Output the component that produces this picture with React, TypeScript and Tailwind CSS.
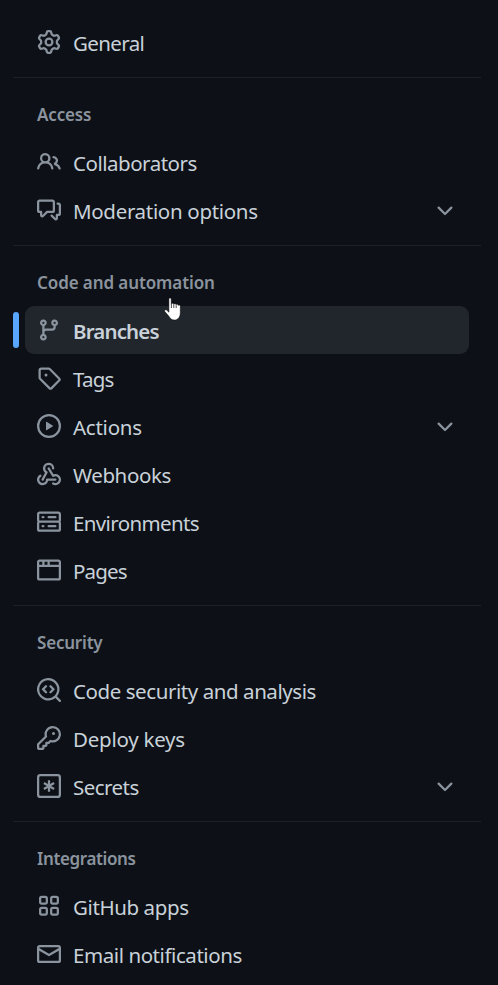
import type { ReactNode } from "react";

const paths = {
  gear: "M8 0a8.2 8.2 0 0 1 .701.031C9.444.095 9.99.645 10.16 1.29l.288 1.107c.018.066.079.158.212.224.231.114.454.243.668.386.123.082.233.09.299.071l1.103-.303c.644-.176 1.392.021 1.82.63.27.385.506.792.704 1.218.315.675.111 1.422-.364 1.891l-.814.806c-.049.048-.098.147-.088.294.016.257.016.515 0 .772-.01.147.038.246.088.294l.814.806c.475.469.679 1.216.364 1.891a7.977 7.977 0 0 1-.704 1.217c-.428.61-1.176.807-1.82.63l-1.102-.302c-.067-.019-.177-.011-.3.071a5.909 5.909 0 0 1-.668.386c-.133.066-.194.158-.211.224l-.29 1.106c-.168.646-.715 1.196-1.458 1.26a8.006 8.006 0 0 1-1.402 0c-.743-.064-1.289-.614-1.458-1.26l-.289-1.106c-.018-.066-.079-.158-.212-.224a5.738 5.738 0 0 1-.668-.386c-.123-.082-.233-.09-.299-.071l-1.103.303c-.644.176-1.392-.021-1.82-.63a8.12 8.12 0 0 1-.704-1.218c-.315-.675-.111-1.422.363-1.891l.815-.806c.05-.048.098-.147.088-.294a6.214 6.214 0 0 1 0-.772c.01-.147-.038-.246-.088-.294l-.815-.806C.635 6.045.431 5.298.746 4.623a7.92 7.92 0 0 1 .704-1.217c.428-.61 1.176-.807 1.82-.63l1.102.302c.067.019.177.011.3-.071.214-.143.437-.272.668-.386.133-.066.194-.158.211-.224l.29-1.106C6.009.645 6.556.095 7.299.03 7.53.01 7.764 0 8 0Zm-.571 1.525c-.036.003-.108.036-.137.146l-.289 1.105c-.147.561-.549.967-.998 1.189-.173.086-.34.183-.5.29-.417.278-.97.423-1.529.27l-1.103-.303c-.109-.03-.175.016-.195.045-.22.312-.412.644-.573.99-.014.031-.021.11.059.19l.815.806c.411.406.562.957.53 1.456a4.709 4.709 0 0 0 0 .582c.032.499-.119 1.05-.53 1.456l-.815.806c-.081.08-.073.159-.059.19.162.346.353.677.573.989.02.03.085.076.195.046l1.102-.303c.56-.153 1.113-.008 1.53.27.161.107.328.204.501.29.447.222.85.629.997 1.189l.289 1.105c.029.109.101.143.137.146a6.6 6.6 0 0 0 1.142 0c.036-.003.108-.036.137-.146l.289-1.105c.147-.561.549-.967.998-1.189.173-.086.34-.183.5-.29.417-.278.97-.423 1.529-.27l1.103.303c.109.029.175-.016.195-.045.22-.313.411-.644.573-.99.014-.031.021-.11-.059-.19l-.815-.806c-.411-.406-.562-.957-.53-1.456a4.709 4.709 0 0 0 0-.582c-.032-.499.119-1.05.53-1.456l.815-.806c.081-.08.073-.159.059-.19a6.464 6.464 0 0 0-.573-.989c-.02-.03-.085-.076-.195-.046l-1.102.303c-.56.153-1.113.008-1.53-.27a4.44 4.44 0 0 0-.501-.29c-.447-.222-.85-.629-.997-1.189l-.289-1.105c-.029-.11-.101-.143-.137-.146a6.6 6.6 0 0 0-1.142 0ZM11 8a3 3 0 1 1-6 0 3 3 0 0 1 6 0ZM9.5 8a1.5 1.5 0 1 0-3.001.001A1.5 1.5 0 0 0 9.5 8Z",
  people: "M2 5.5a3.5 3.5 0 1 1 5.898 2.549 5.508 5.508 0 0 1 3.034 4.084.75.75 0 1 1-1.482.235 4 4 0 0 0-7.9 0 .75.75 0 0 1-1.482-.236A5.507 5.507 0 0 1 3.102 8.05 3.493 3.493 0 0 1 2 5.5ZM11 4a3.001 3.001 0 0 1 2.22 5.018 5.01 5.01 0 0 1 2.56 3.012.749.749 0 0 1-.885.954.752.752 0 0 1-.549-.514 3.507 3.507 0 0 0-2.522-2.372.75.75 0 0 1-.574-.73v-.352a.75.75 0 0 1 .416-.672A1.5 1.5 0 0 0 11 5.5.75.75 0 0 1 11 4Zm-5.5-.5a2 2 0 1 0-.001 3.999A2 2 0 0 0 5.5 3.5Z",
  discussion: "M1.75 1h8.5c.966 0 1.75.784 1.75 1.75v5.5A1.75 1.75 0 0 1 10.25 10H7.061l-2.574 2.573A1.458 1.458 0 0 1 2 11.543V10h-.25A1.75 1.75 0 0 1 0 8.25v-5.5C0 1.784.784 1 1.75 1ZM1.5 2.75v5.5c0 .138.112.25.25.25h1a.75.75 0 0 1 .75.75v2.19l2.72-2.72a.749.749 0 0 1 .53-.22h3.5a.25.25 0 0 0 .25-.25v-5.5a.25.25 0 0 0-.25-.25h-8.5a.25.25 0 0 0-.25.25Zm13 2a.25.25 0 0 0-.25-.25h-.5a.75.75 0 0 1 0-1.5h.5c.966 0 1.75.784 1.75 1.75v5.5A1.75 1.75 0 0 1 14.25 12H14v1.543a1.458 1.458 0 0 1-2.487 1.03L9.22 12.28a.749.749 0 0 1 .326-1.275.749.749 0 0 1 .734.215l2.22 2.22v-2.19a.75.75 0 0 1 .75-.75h1a.25.25 0 0 0 .25-.25Z",
  branch: "M9.5 3.25a2.25 2.25 0 1 1 3 2.122V6A2.5 2.5 0 0 1 10 8.5H6a1 1 0 0 0-1 1v1.128a2.251 2.251 0 1 1-1.5 0V5.372a2.25 2.25 0 1 1 1.5 0v1.836A2.493 2.493 0 0 1 6 7h4a1 1 0 0 0 1-1v-.628A2.25 2.25 0 0 1 9.5 3.25Zm-6 0a.75.75 0 1 0 1.5 0 .75.75 0 0 0-1.5 0Zm8.25-.75a.75.75 0 1 0 0 1.5.75.75 0 0 0 0-1.5ZM4.25 12a.75.75 0 1 0 0 1.5.75.75 0 0 0 0-1.5Z",
  tag: "M1 7.775V2.75C1 1.784 1.784 1 2.75 1h5.025c.464 0 .91.184 1.238.513l6.25 6.25a1.75 1.75 0 0 1 0 2.474l-5.026 5.026a1.75 1.75 0 0 1-2.474 0l-6.25-6.25A1.752 1.752 0 0 1 1 7.775Zm1.5 0c0 .066.026.13.073.177l6.25 6.25a.25.25 0 0 0 .354 0l5.025-5.025a.25.25 0 0 0 0-.354l-6.25-6.25a.25.25 0 0 0-.177-.073H2.75a.25.25 0 0 0-.25.25ZM6 5a1 1 0 1 1 0 2 1 1 0 0 1 0-2Z",
  play: "M8 0a8 8 0 1 1 0 16A8 8 0 0 1 8 0ZM1.5 8a6.5 6.5 0 1 0 13 0 6.5 6.5 0 0 0-13 0Zm4.879-2.773 4.264 2.559a.25.25 0 0 1 0 .428l-4.264 2.559A.25.25 0 0 1 6 10.559V5.442a.25.25 0 0 1 .379-.215Z",
  webhook: "M5.5 4.25a2.25 2.25 0 0 1 4.5 0 .75.75 0 0 0 1.5 0 3.75 3.75 0 1 0-6.14 2.889l-2.272 4.258a.75.75 0 0 0 1.324.706L7 7.25a.75.75 0 0 0-.309-1.015A2.25 2.25 0 0 1 5.5 4.25Z M7.364 3.607a.75.75 0 0 1 1.03.257l2.608 4.349a3.75 3.75 0 1 1-.628 6.785.75.75 0 0 1 .752-1.299 2.25 2.25 0 1 0-.033-3.88.75.75 0 0 1-1.03-.256L7.107 4.636a.75.75 0 0 1 .257-1.03Z M2.9 8.776A.75.75 0 0 1 2.625 9.8 2.25 2.25 0 1 0 6 11.75a.75.75 0 0 1 .75-.751h5.5a.75.75 0 0 1 0 1.5H7.425a3.751 3.751 0 1 1-5.55-3.998.75.75 0 0 1 1.024.274Z",
  server: "M1.75 1h12.5c.966 0 1.75.784 1.75 1.75v4c0 .372-.116.717-.314 1 .198.283.314.628.314 1v4a1.75 1.75 0 0 1-1.75 1.75H1.75A1.75 1.75 0 0 1 0 12.75v-4c0-.358.109-.707.314-1a1.739 1.739 0 0 1-.314-1v-4C0 1.784.784 1 1.75 1ZM1.5 2.75v4c0 .138.112.25.25.25h12.5a.25.25 0 0 0 .25-.25v-4a.25.25 0 0 0-.25-.25H1.75a.25.25 0 0 0-.25.25Zm.25 5.75a.25.25 0 0 0-.25.25v4c0 .138.112.25.25.25h12.5a.25.25 0 0 0 .25-.25v-4a.25.25 0 0 0-.25-.25ZM7 4.75A.75.75 0 0 1 7.75 4h4.5a.75.75 0 0 1 0 1.5h-4.5A.75.75 0 0 1 7 4.75ZM7.75 10h4.5a.75.75 0 0 1 0 1.5h-4.5a.75.75 0 0 1 0-1.5ZM3 4.75A.75.75 0 0 1 3.75 4h.5a.75.75 0 0 1 0 1.5h-.5A.75.75 0 0 1 3 4.75ZM3.75 10h.5a.75.75 0 0 1 0 1.5h-.5a.75.75 0 0 1 0-1.5Z",
  browser: "M0 2.75C0 1.784.784 1 1.75 1h12.5c.966 0 1.75.784 1.75 1.75v10.5A1.75 1.75 0 0 1 14.25 15H1.75A1.75 1.75 0 0 1 0 13.25ZM14.5 6h-13v7.25c0 .138.112.25.25.25h12.5a.25.25 0 0 0 .25-.25Zm-6-3.5v2h6V2.75a.25.25 0 0 0-.25-.25ZM5 2.5v2h2v-2Zm-3.25 0a.25.25 0 0 0-.25.25V4.5h2v-2Z",
  codescan: "M8.47 4.97a.75.75 0 0 0 0 1.06L9.94 7.5 8.47 8.97a.75.75 0 1 0 1.06 1.06l2-2a.75.75 0 0 0 0-1.06l-2-2a.75.75 0 0 0-1.06 0ZM6.53 6.03a.75.75 0 0 0-1.06-1.06l-2 2a.75.75 0 0 0 0 1.06l2 2a.75.75 0 1 0 1.06-1.06L5.06 7.5l1.47-1.47Z M12.246 13.307a7.5 7.5 0 1 1 1.06-1.06l2.474 2.473a.749.749 0 0 1-.326 1.275.749.749 0 0 1-.734-.215ZM1.5 7.5a6.002 6.002 0 0 0 3.608 5.504 6.002 6.002 0 0 0 6.486-1.117.748.748 0 0 1 .292-.293A6 6 0 1 0 1.5 7.5Z",
  key: "M10.5 0a5.499 5.499 0 1 1-1.288 10.848l-.932.932a.749.749 0 0 1-.53.22H7v.75a.749.749 0 0 1-.22.53l-.5.5a.749.749 0 0 1-.53.22H5v.75a.749.749 0 0 1-.22.53l-.5.5a.749.749 0 0 1-.53.22h-2A1.75 1.75 0 0 1 0 14.25v-2c0-.199.079-.389.22-.53l4.932-4.932A5.5 5.5 0 0 1 10.5 0Zm-4 5.5c-.001.431.069.86.205 1.269a.75.75 0 0 1-.181.768L1.5 12.56v1.69c0 .138.112.25.25.25h1.69l.06-.06v-1.19a.75.75 0 0 1 .75-.75h1.19l.06-.06v-1.19a.75.75 0 0 1 .75-.75h1.19l1.023-1.025a.75.75 0 0 1 .768-.18A4 4 0 1 0 6.5 5.5ZM11 6a1 1 0 1 1 0-2 1 1 0 0 1 0 2Z",
  mail: "M1.75 2h12.5c.966 0 1.75.784 1.75 1.75v8.5A1.75 1.75 0 0 1 14.25 14H1.75A1.75 1.75 0 0 1 0 12.25v-8.5C0 2.784.784 2 1.75 2ZM1.5 12.251c0 .138.112.25.25.25h12.5a.25.25 0 0 0 .25-.25V5.809L8.38 9.397a.75.75 0 0 1-.76 0L1.5 5.809v6.442Zm13-8.181v-.32a.25.25 0 0 0-.25-.25H1.75a.25.25 0 0 0-.25.25v.32L8 7.88Z",
  chevron: "M12.78 5.22a.749.749 0 0 1 0 1.06l-4.25 4.25a.749.749 0 0 1-1.06 0L3.22 6.28a.749.749 0 1 1 1.06-1.06L8 8.939l3.72-3.719a.749.749 0 0 1 1.06 0Z",
};

function Glyph({ d }: { d: string }) {
  return (
    <svg viewBox="0 0 16 16" className="size-6 shrink-0 fill-[#8b949e]">
      <path d={d} />
    </svg>
  );
}

function Outline({ children }: { children: ReactNode }) {
  return (
    <svg viewBox="0 0 16 16" className="size-6 shrink-0 fill-none stroke-[#8b949e] stroke-[1.5]">
      {children}
    </svg>
  );
}

const secretIcon = (
  <Outline>
    <rect x="0.75" y="0.75" width="14.5" height="14.5" rx="1.5" />
    <path d="M8 4.1v7.8M4.6 6.05l6.8 3.9M11.4 6.05l-6.8 3.9" />
  </Outline>
);

const appsIcon = (
  <Outline>
    <rect x="2.1" y="1.9" width="4.45" height="4.45" rx="1.1" />
    <rect x="9.45" y="1.9" width="4.45" height="4.45" rx="1.1" />
    <rect x="2.1" y="9.25" width="4.45" height="4.45" rx="1.1" />
    <rect x="9.45" y="9.25" width="4.45" height="4.45" rx="1.1" />
  </Outline>
);

type Item = { label: string; icon: ReactNode; expandable?: boolean; active?: boolean; tracking: string };
type Section = { title?: string; titleTracking?: string; items: Item[] };

const sections: Section[] = [
  { items: [{ label: "General", icon: <Glyph d={paths.gear} />, tracking: "tracking-[-0.62px]" }] },
  {
    title: "Access",
    titleTracking: "tracking-[-0.15px]",
    items: [
      { label: "Collaborators", icon: <Glyph d={paths.people} />, tracking: "tracking-[-0.48px]" },
      { label: "Moderation options", icon: <Glyph d={paths.discussion} />, expandable: true, tracking: "tracking-[-0.32px]" },
    ],
  },
  {
    title: "Code and automation",
    titleTracking: "tracking-[-0.1px]",
    items: [
      { label: "Branches", icon: <Glyph d={paths.branch} />, active: true, tracking: "tracking-[-0.85px]" },
      { label: "Tags", icon: <Glyph d={paths.tag} />, tracking: "tracking-[-0.8px]" },
      { label: "Actions", icon: <Glyph d={paths.play} />, expandable: true, tracking: "tracking-[-0.25px]" },
      { label: "Webhooks", icon: <Glyph d={paths.webhook} />, tracking: "tracking-[-0.4px]" },
      { label: "Environments", icon: <Glyph d={paths.server} />, tracking: "tracking-[-0.63px]" },
      { label: "Pages", icon: <Glyph d={paths.browser} />, tracking: "tracking-[-0.85px]" },
    ],
  },
  {
    title: "Security",
    titleTracking: "tracking-[-0.2px]",
    items: [
      { label: "Code security and analysis", icon: <Glyph d={paths.codescan} />, tracking: "tracking-[-0.43px]" },
      { label: "Deploy keys", icon: <Glyph d={paths.key} />, tracking: "tracking-[-0.25px]" },
      { label: "Secrets", icon: secretIcon, expandable: true, tracking: "tracking-[-0.53px]" },
    ],
  },
  {
    title: "Integrations",
    titleTracking: "tracking-[-0.37px]",
    items: [
      { label: "GitHub apps", icon: appsIcon, tracking: "tracking-[-0.4px]" },
      { label: "Email notifications", icon: <Glyph d={paths.mail} />, tracking: "tracking-[-0.43px]" },
    ],
  },
];

function Row({ item }: { item: Item }) {
  return (
    <li className="relative mx-3">
      {item.active && <span className="absolute top-1.5 -left-3 h-9 w-1.5 rounded-md bg-[#58a6ff]" />}
      <a
        className={
          item.active
            ? "flex h-12 items-center gap-3 rounded-[9px] bg-[#21262d] px-3 font-semibold"
            : "flex h-12 items-center gap-3 rounded-[9px] px-3"
        }
      >
        {item.icon}
        <span className={`grow pt-0.5 text-[20.5px] leading-[30px] whitespace-nowrap ${item.tracking}`}>{item.label}</span>
        {item.expandable && (
          <span className="pt-0.5">
            <Glyph d={paths.chevron} />
          </span>
        )}
      </a>
    </li>
  );
}

function HandCursor() {
  return (
    <svg viewBox="0 0 18 24" className="absolute top-[297px] left-[164px] h-6 w-[18px]">
      <path
        d="M4.9 1.9c0-1.2 2.3-1.2 2.3 0v5.2c.3-1 2.3-1 2.4.2.5-.9 2.3-.7 2.5.4.6-.8 2.2-.5 2.2.7.7-.6 2-.3 2 .9v6.4c0 3.9-2 7.3-5.8 7.3-2.9 0-4.3-1.4-5.6-3.7L.8 14.6c-.8-1.4.8-2.6 1.9-1.5L4.9 15.2Z"
        className="fill-white stroke-black"
        strokeWidth="0.5"
      />
      <path d="M7.4 7v4M9.8 7.5v3.5M12.2 8.2v2.8" className="fill-none stroke-black" strokeWidth="0.7" />
    </svg>
  );
}

export default function App() {
  return (
    <div className="relative h-[985px] w-[498px] overflow-hidden bg-[#0d1117] pt-[18px] font-['Noto_Sans',sans-serif] text-[#c9d1d9]">
      <nav className="mr-[17px] ml-[13px]">
        {sections.map((section, i) => (
          <section key={i} className={i > 0 ? "mt-[11px] border-t border-[#1d2229]" : ""}>
            {section.title && (
              <h3
                className={`flex h-[60px] items-center px-6 pt-3.5 text-[17px] font-semibold text-[#8b949e] ${section.titleTracking}`}
              >
                {section.title}
              </h3>
            )}
            <ul>
              {section.items.map((item) => (
                <Row key={item.label} item={item} />
              ))}
            </ul>
          </section>
        ))}
      </nav>
      <HandCursor />
    </div>
  );
}
